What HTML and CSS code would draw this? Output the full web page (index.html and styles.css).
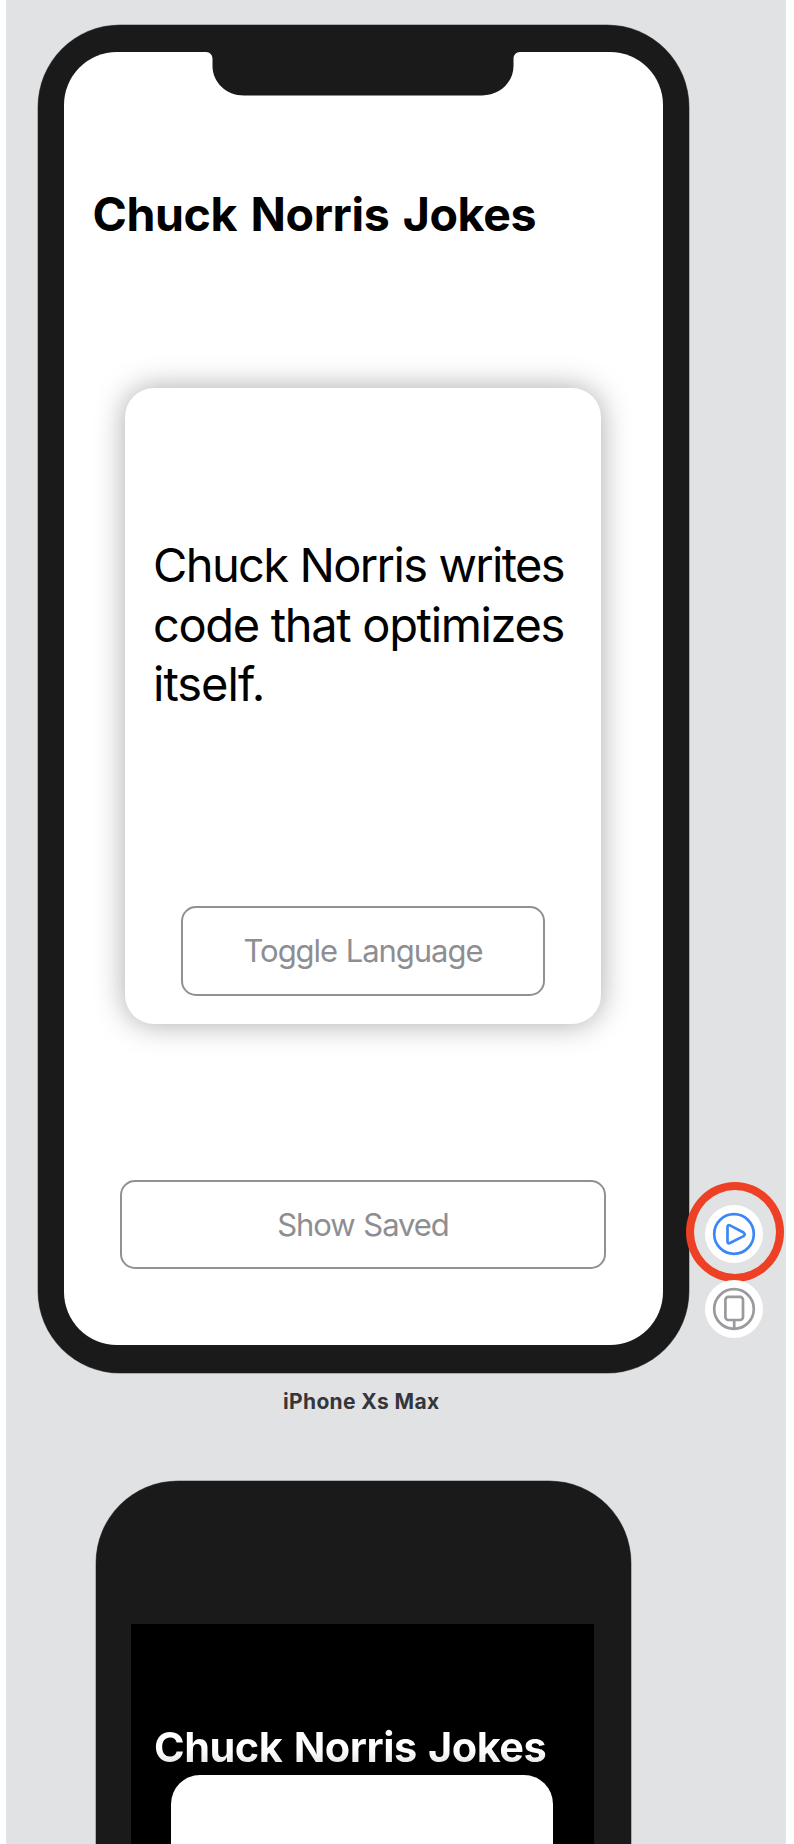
FILE: index.html
```html
<!DOCTYPE html>
<html lang="en">
<head>
<meta charset="utf-8">
<title>Preview canvas</title>
<link rel="stylesheet" href="styles.css">
</head>
<body>
<main class="canvas">
  <section class="preview">
    <div class="phone phone-max">
      <div class="screen screen-light">
        <svg class="notch" width="314" height="44" viewBox="0 0 314 44"><path d="M0 0C4 0 6.500 3 6.500 7V14C6.500 30 20 43.500 38 43.500H276C294 43.500 307.500 30 307.500 14V7C307.500 3 310 0 314 0Z"/></svg>
        <h1 class="title">Chuck Norris Jokes</h1>
        <article class="card">
          <p class="joke"><span class="line line-tight">Chuck Norris writes</span> <span class="line">code that optimizes</span> <span class="line line-last">itself.</span></p>
          <button class="btn btn-toggle"><span>Toggle Language</span></button>
        </article>
        <button class="btn btn-saved"><span>Show Saved</span></button>
      </div>
    </div>
    <div class="actions">
      <div class="action">
        <svg width="58" height="58" viewBox="0 0 58 58"><circle cx="29" cy="29" r="19.800"/><path d="M22.500 22V36.500Q22.500 39 25 38L38.500 31.200Q41 29.300 38.500 27.500L25 20.400Q22.500 19.500 22.500 22Z"/></svg>
        <span class="ring"></span>
      </div>
      <div class="action action-device">
        <svg width="58" height="58" viewBox="0 0 58 58"><circle cx="29" cy="29" r="19.800"/><rect x="20.400" y="16.800" width="17.600" height="23.200" rx="3"/><path d="M29.200 40V48"/></svg>
      </div>
    </div>
  </section>
  <p class="device-name"><span>iPhone Xs Max</span></p>
  <div class="phone phone-small">
    <div class="screen screen-dark">
      <h1 class="title title-small">Chuck Norris Jokes</h1>
      <article class="card card-small"></article>
    </div>
  </div>
</main>
</body>
</html>
```
FILE: styles.css
```css
* { box-sizing: border-box; }
body { margin: 0; background: #fff; font-family: Inter, "Liberation Sans", sans-serif; }
.canvas {
  height: 1844px;
  margin: 0 8px 0 6px;
  padding: 24.5px 0 0 32px;
  background: #e1e2e4;
  overflow: hidden;
}
.preview { display: flex; align-items: flex-end; gap: 16px; }
.phone { background: #1a1a1a; box-shadow: 0 0 0 .5px #77787a; }
.phone-max {
  width: 650.500px;
  height: 1348px;
  padding: 27.500px 26px 28px 25.500px;
  border-radius: 82px;
}
.screen { display: flex; flex-direction: column; }
.screen-light {
  position: relative;
  height: 100%;
  border-radius: 53px;
  background: #fff;
  align-items: center;
}
.notch { position: absolute; top: -.5px; left: 142.500px; fill: #1a1a1a; }
.title {
  align-self: flex-start;
  margin: 133px 0 0 29px;
  font-size: 46.500px;
  font-weight: 700;
  line-height: 58px;
  letter-spacing: -.4px;
  word-spacing: 2.800px;
  white-space: nowrap;
  color: #000;
}
.card {
  display: flex;
  flex-direction: column;
  align-items: center;
  width: 476px;
  height: 636px;
  margin-top: 145px;
  padding-top: 147px;
  border-radius: 29px;
  background: #fff;
  box-shadow: 0 0 30px rgba(0, 0, 0, .34);
}
.joke {
  align-self: flex-start;
  margin: 0 0 0 28px;
  font-size: 47px;
  line-height: 59.700px;
  white-space: nowrap;
}
.line { display: block; letter-spacing: -1.330px; }
.line-tight { letter-spacing: -1.620px; word-spacing: .4px; }
.line-last { letter-spacing: -1px; }
.btn {
  flex: none;
  display: flex;
  align-items: center;
  justify-content: center;
  padding: 0;
  border: 2.500px solid #919193;
  border-radius: 15px;
  background: #fff;
  color: #8e8e92;
  font: 400 31px/40px Inter, "Liberation Sans", sans-serif;
  letter-spacing: -1.050px;
  word-spacing: 1px;
}
.btn-toggle { width: 364px; height: 90px; margin-top: 192px; }
.btn-saved { width: 486px; height: 89px; margin-top: 156px; }
.actions { display: flex; flex-direction: column; gap: 17.500px; padding-bottom: 34.500px; }
.action {
  position: relative;
  width: 58px;
  height: 58px;
  border-radius: 50%;
  background: #fff;
  color: #3b87f8;
}
.action-device { color: #9a9a9e; }
.action svg { display: block; fill: none; stroke: currentColor; stroke-width: 2.700; }
.ring {
  position: absolute;
  top: -22.500px;
  left: -19px;
  width: 98px;
  height: 100px;
  border: 8px solid #ed4024;
  border-radius: 50%;
}
.device-name {
  width: 646.500px;
  margin: 15px 0 0;
  text-align: center;
  font-size: 21px;
  font-weight: 700;
  line-height: 28px;
  letter-spacing: .35px;
  color: #35363a;
}
.phone-small {
  width: 535px;
  height: 600px;
  margin: 65.500px 0 0 57.500px;
  padding: 142.500px 36.500px 0 35.500px;
  border-radius: 82px;
}
.screen-dark { height: 457px; background: #000; }
.title-small {
  margin: 98px 0 0 23px;
  font-size: 41.500px;
  line-height: 50px;
  letter-spacing: -.5px;
  word-spacing: 2px;
  background: linear-gradient(#fff 55%, #e9e9e9 80%);
  background-clip: text;
  -webkit-background-clip: text;
  color: transparent;
}
.card-small { width: 382px; height: 300px; margin: 3px 0 0 40px; box-shadow: none; }
```
